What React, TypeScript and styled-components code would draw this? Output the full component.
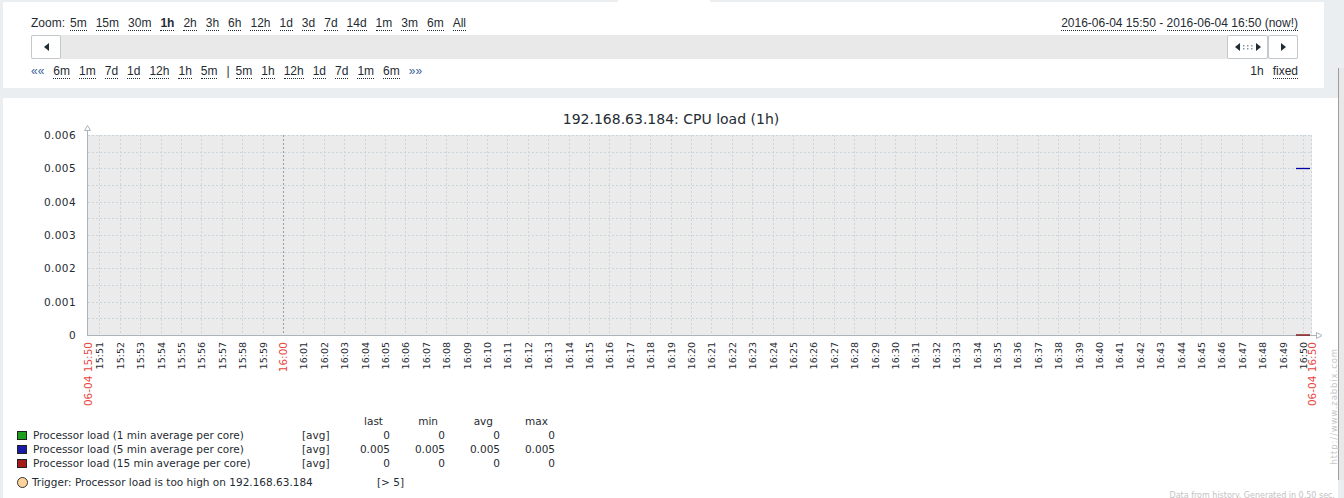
import React from 'react';
import styled, { createGlobalStyle } from 'styled-components';

const GlobalStyle = createGlobalStyle`
  html, body {
    margin: 0;
    padding: 0;
    background: #ebeef0;
  }
  body {
    font-family: "Liberation Sans", Arial, sans-serif;
    color: #1f2c33;
    overflow: hidden;
  }
`;

const ZOOMS = ['5m', '15m', '30m', '1h', '2h', '3h', '6h', '12h', '1d', '3d', '7d', '14d', '1m', '3m', '6m', 'All'];
const BACK = ['6m', '1m', '7d', '1d', '12h', '1h', '5m'];
const FWD = ['5m', '1h', '12h', '1d', '7d', '1m', '6m'];

const SERIES = [
  { name: 'Processor load (1 min average per core)', color: '#1ea01e', values: ['0', '0', '0', '0'] },
  { name: 'Processor load (5 min average per core)', color: '#1a1aa6', values: ['0.005', '0.005', '0.005', '0.005'] },
  { name: 'Processor load (15 min average per core)', color: '#a61a1a', values: ['0', '0', '0', '0'] },
];

// chart geometry, in page pixels
const PLOT_L = 88;
const PLOT_R = 1312;
const PLOT_T = 135;
const PLOT_B = 335;
const X_1600 = 283;
const MIN_STEP = 20.4;
const minuteX = (m: number) => X_1600 + (m - 60) * MIN_STEP;
const Y_LABELS = ['0.006', '0.005', '0.004', '0.003', '0.002', '0.001', '0'];

const fmtMinute = (m: number) => {
  const h = 15 + Math.floor(m / 60);
  const mm = m % 60;
  return `${h}:${mm < 10 ? '0' : ''}${mm}`;
};

const Arrow = ({ dir }: { dir: 'left' | 'right' }) => (
  <svg width="5" height="8" viewBox="0 0 5 8">
    <polygon points={dir === 'left' ? '5,0 0,4 5,8' : '0,0 5,4 0,8'} fill="#1f2c33" />
  </svg>
);

const Grip = () => (
  <svg width="10" height="5" viewBox="0 0 10 5">
    {[0, 1].map(r =>
      [0, 1, 2].map(c => <rect key={`${r}-${c}`} x={c * 4} y={r * 3} width="1.5" height="1.5" fill="#8d969c" />),
    )}
  </svg>
);

const Chart = () => {
  const minutes = Array.from({ length: 60 }, (_, i) => 51 + i);
  const hLines = Array.from({ length: 12 }, (_, i) => PLOT_T + (i * (PLOT_B - PLOT_T)) / 12);
  return (
    <svg width="1335" height="316" viewBox="3 98 1335 316" style={{ display: 'block' }}>
      <text x="671" y="123.5" textAnchor="middle" fontFamily="DejaVu Sans" fontSize="14" fill="#1f2c33">
        192.168.63.184: CPU load (1h)
      </text>
      <rect x={PLOT_L} y={PLOT_T} width={PLOT_R - PLOT_L} height={PLOT_B - PLOT_T} fill="#ebebeb" />
      {hLines.map(y => (
        <line
          key={y}
          x1={PLOT_L}
          x2={PLOT_R}
          y1={Math.round(y) + 0.5}
          y2={Math.round(y) + 0.5}
          stroke="#c9d4db"
          strokeDasharray="2 2"
        />
      ))}
      {minutes.map(m => {
        const x = Math.round(minuteX(m)) + 0.5;
        return (
          <line
            key={m}
            x1={x}
            x2={x}
            y1={PLOT_T}
            y2={PLOT_B}
            stroke={m === 60 ? '#9a9fa3' : '#c9d4db'}
            strokeDasharray="2 2"
          />
        );
      })}
      <line x1={PLOT_R - 0.5} x2={PLOT_R - 0.5} y1={PLOT_T} y2={PLOT_B} stroke="#c9d4db" strokeDasharray="2 2" />

      {/* axes */}
      <line x1="87.5" x2="87.5" y1="130" y2="336" stroke="#a9b4bb" />
      <polygon points="87.5,125.5 84.5,130.5 90.5,130.5" fill="#fff" stroke="#a9b4bb" />
      <line x1="87" x2="1317" y1="335.5" y2="335.5" stroke="#a9b4bb" />
      <polygon points="1322,335.5 1316.5,332.5 1316.5,338.5" fill="#fff" stroke="#a9b4bb" />

      {/* data */}
      <line x1="1296" x2="1310" y1="168.5" y2="168.5" stroke="#0000a8" strokeWidth="1.3" />
      <line x1="1296" x2="1310" y1="335" y2="335" stroke="#7a0000" strokeWidth="1.3" />

      {Y_LABELS.map((l, i) => (
        <text
          key={l}
          x="76"
          y={PLOT_T + (i * (PLOT_B - PLOT_T)) / 6 + 4}
          textAnchor="end"
          fontFamily="DejaVu Sans"
          fontSize="10.5"
          letterSpacing="0.4"
          fill="#1f2c33"
        >
          {l}
        </text>
      ))}

      {minutes.map(m => {
        const red = m === 60;
        const bx = Math.round(minuteX(m)) + 4;
        return (
          <text
            key={m}
            transform={`translate(${bx},342) rotate(-90)`}
            textAnchor="end"
            fontFamily="DejaVu Sans"
            fontSize={red ? 10.5 : 9.5}
            fill={red ? '#e8453c' : '#1f2c33'}
          >
            {fmtMinute(m)}
          </text>
        );
      })}
      <text transform="translate(92,342) rotate(-90)" textAnchor="end" fontFamily="DejaVu Sans" fontSize="10.5" fill="#e8453c">
        06-04 15:50
      </text>
      <text transform="translate(1316,342) rotate(-90)" textAnchor="end" fontFamily="DejaVu Sans" fontSize="10.5" fill="#e8453c">
        06-04 16:50
      </text>
    </svg>
  );
};

export default function App() {
  return (
    <>
      <GlobalStyle />
      <Page>
        <MainCol>
          <TabStub />
          <TopPanel>
            <NavRow>
              <LinkGroup>
                <ZoomLabel>Zoom:</ZoomLabel>
                {ZOOMS.map(z => (
                  <NavLink key={z} $bold={z === '1h'}>
                    {z}
                  </NavLink>
                ))}
              </LinkGroup>
              <DateRange>
                <NavLink>2016-06-04 15:50</NavLink>
                <Plain>&nbsp;-&nbsp;</Plain>
                <NavLink>2016-06-04 16:50 (now!)</NavLink>
              </DateRange>
            </NavRow>
            <Bar>
              <BarButton $w={30}>
                <Arrow dir="left" />
              </BarButton>
              <ButtonPair>
                <BarButton $w={41}>
                  <Arrow dir="left" />
                  <Grip />
                  <Arrow dir="right" />
                </BarButton>
                <BarButton $w={30}>
                  <Arrow dir="right" />
                </BarButton>
              </ButtonPair>
            </Bar>
            <NavRow>
              <LinkGroup>
                <Jump>««</Jump>
                {BACK.map((b, i) => (
                  <NavLink key={`b${i}`}>{b}</NavLink>
                ))}
                <Separator>|</Separator>
                {FWD.map((f, i) => (
                  <NavLink key={`f${i}`}>{f}</NavLink>
                ))}
                <Jump>»»</Jump>
              </LinkGroup>
              <LinkGroup>
                <Plain>1h</Plain>
                <NavLink>fixed</NavLink>
              </LinkGroup>
            </NavRow>
          </TopPanel>

          <ChartPanel>
            <Chart />
            <Legend>
              <span />
              <span />
              <span />
              <ColHead>last</ColHead>
              <ColHead>min</ColHead>
              <ColHead>avg</ColHead>
              <ColHead>max</ColHead>
              {SERIES.map(s => (
                <React.Fragment key={s.name}>
                  <Swatch $color={s.color} />
                  <span>{s.name}</span>
                  <span>[avg]</span>
                  {s.values.map((v, i) => (
                    <Value key={i}>{v}</Value>
                  ))}
                </React.Fragment>
              ))}
            </Legend>
            <TriggerRow>
              <TriggerDot />
              <TriggerText>Trigger: Processor load is too high on 192.168.63.184</TriggerText>
              <span>[&gt; 5]</span>
            </TriggerRow>
            <Footer>Data from history. Generated in 0.50 sec.</Footer>
            <Watermark>http://www.zabbix.com</Watermark>
          </ChartPanel>
        </MainCol>
        <EdgeStrip />
      </Page>
    </>
  );
}

const Page = styled.div`
  display: flex;
  align-items: flex-start;
  width: 1344px;
  height: 498px;
  overflow: hidden;
`;

const MainCol = styled.div`
  flex: none;
  margin-left: 3px;
  width: 1335px;
`;

const TabStub = styled.div`
  margin-left: 615px;
  width: 92px;
  height: 2px;
  background: #fff;
`;

const TopPanel = styled.div`
  width: 1321px;
  height: 86px;
  box-sizing: border-box;
  padding: 14px 26px 0 28px;
  background: #fff;
  display: flex;
  flex-direction: column;
  gap: 5px;
`;

const NavRow = styled.div`
  flex: none;
  display: flex;
  justify-content: space-between;
  align-items: flex-start;
  height: 14px;
  font-size: 12px;
  line-height: 14px;
`;

const LinkGroup = styled.div`
  display: flex;
  gap: 9px;
`;

const ZoomLabel = styled.span`
  margin-right: -4px;
`;

const NavLink = styled.span<{ $bold?: boolean }>`
  display: block;
  height: 14px;
  border-bottom: 1px dotted #1f2c33;
  font-weight: ${p => (p.$bold ? 'bold' : 'normal')};
  white-space: pre;
  cursor: pointer;
`;

const Plain = styled.span`
  white-space: pre;
`;

const DateRange = styled.div`
  display: flex;
`;

const Jump = styled.span`
  color: #3d5f98;
`;

const Separator = styled.span`
  margin-right: -3px;
`;

const Bar = styled.div`
  flex: none;
  display: flex;
  justify-content: space-between;
  height: 24px;
  background: #e9e9e9;
`;

const ButtonPair = styled.div`
  display: flex;
`;

const BarButton = styled.button<{ $w: number }>`
  width: ${p => p.$w}px;
  height: 24px;
  box-sizing: border-box;
  padding: 0;
  border: 1px solid #c2c8cc;
  border-radius: 2px;
  background: #fff;
  display: flex;
  align-items: center;
  justify-content: center;
  gap: 3px;
`;

const ChartPanel = styled.div`
  position: relative;
  margin-top: 10px;
  width: 1335px;
  height: 410px;
  background: #fff;
  font-family: "DejaVu Sans", sans-serif;
  color: #1f2c33;
`;

const Legend = styled.div`
  display: grid;
  grid-template-columns: 16px 269px 40px 48px 55px 55px 55px;
  grid-auto-rows: 14px;
  align-items: center;
  padding-left: 14px;
  font-size: 10.5px;
  line-height: 14px;
  white-space: pre;
`;

const ColHead = styled.span`
  text-align: right;
  padding-right: 7px;
`;

const Value = styled.span`
  text-align: right;
`;

const Swatch = styled.span<{ $color: string }>`
  width: 8px;
  height: 7px;
  border: 1px solid #222;
  background: ${p => p.$color};
`;

const TriggerRow = styled.div`
  display: flex;
  align-items: center;
  height: 14px;
  margin-top: 5px;
  padding-left: 14px;
  font-size: 10.5px;
  white-space: pre;
`;

const TriggerDot = styled.span`
  width: 9px;
  height: 9px;
  margin-right: 4px;
  border: 1px solid #333;
  border-radius: 50%;
  background: #ffd49c;
`;

const TriggerText = styled.span`
  width: 345px;
`;

const Footer = styled.div`
  margin-top: 2px;
  padding-right: 3px;
  text-align: right;
  font-size: 8px;
  line-height: 10px;
  color: #c2c2c2;
  white-space: pre;
`;

const Watermark = styled.div`
  position: absolute;
  right: 0;
  top: 250px;
  writing-mode: vertical-rl;
  transform: rotate(180deg);
  font-size: 8.5px;
  line-height: 8px;
  letter-spacing: 0.9px;
  color: #c6c6c6;
`;

const EdgeStrip = styled.div`
  flex: none;
  margin-top: 68px;
  width: 6px;
  height: 412px;
  box-sizing: border-box;
  border-left: 1px solid #9c9c9c;
  background: #e8e8e8;
`;
